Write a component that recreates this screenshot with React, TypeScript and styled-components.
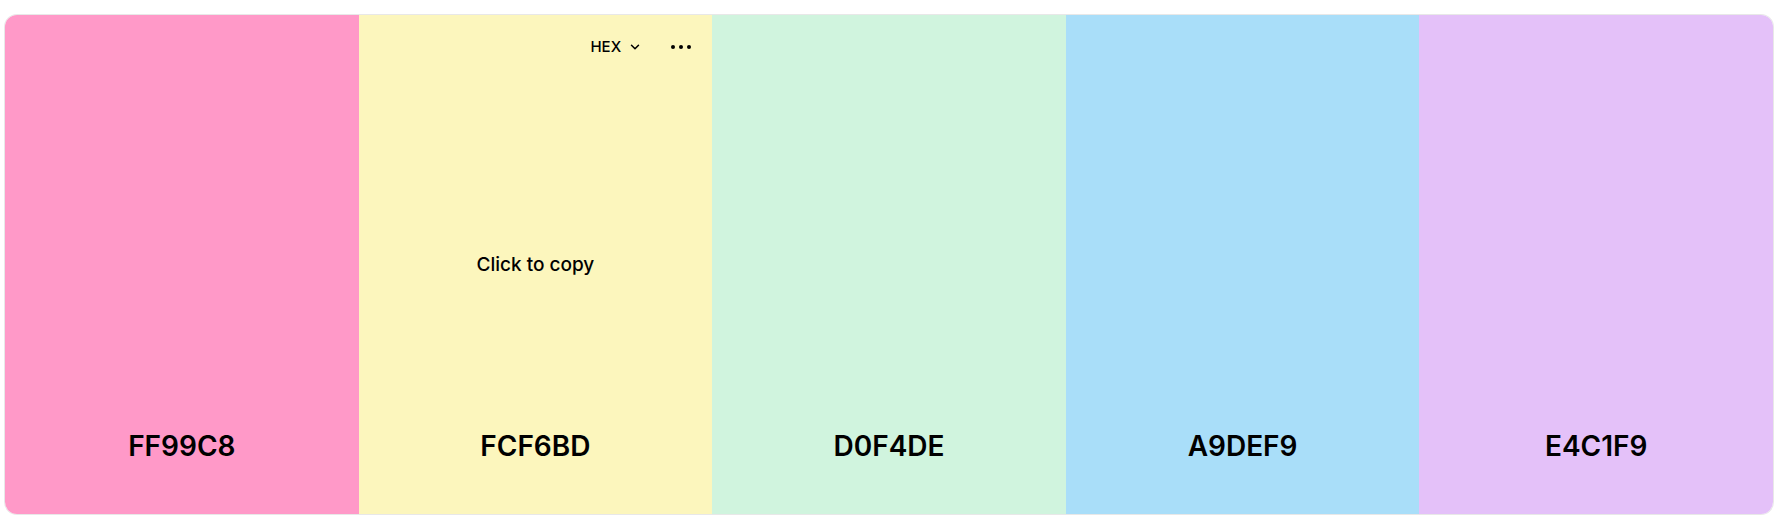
import React from "react";
import styled, { createGlobalStyle } from "styled-components";

const Global = createGlobalStyle`
  html, body { margin: 0; padding: 0; background: #ffffff; }
  body { font-family: Inter, "Noto Sans", sans-serif; color: #000; }
`;

const Page = styled.div`
  padding: 15px 16px 18px 5px;
`;

const Palette = styled.div`
  display: flex;
  height: 499px;
  border-radius: 12px;
  overflow: hidden;
  box-shadow: 0 0 0 1px rgba(0, 0, 0, 0.09);
`;

const Swatch = styled.div<{ $color: string }>`
  position: relative;
  flex: 1 1 0;
  display: flex;
  flex-direction: column;
  justify-content: flex-end;
  align-items: center;
  background: ${(p) => p.$color};
  padding-bottom: 51px;
`;

const Code = styled.div`
  font-family: Inter, "Noto Sans", sans-serif;
  font-size: 28px;
  line-height: 34px;
  font-weight: 600;
  color: #000;
  letter-spacing: 0;
`;

const Toolbar = styled.div`
  position: absolute;
  top: 23px;
  right: 21px;
  display: flex;
  align-items: center;
  height: 18px;
`;

const FormatButton = styled.div`
  display: flex;
  align-items: center;
  gap: 7px;
  font-size: 15px;
  line-height: 18px;
  font-weight: 500;
  margin-right: 29px;
`;

const CopyHint = styled.div`
  position: absolute;
  top: 50%;
  left: 0;
  right: 0;
  transform: translateY(-50%);
  margin-top: -1px;
  text-align: center;
  font-size: 19px;
  line-height: 23px;
  font-weight: 500;
`;

const Chevron = () => (
  <svg width="14" height="14" viewBox="0 0 24 24" fill="none" stroke="#000" strokeWidth="2.6" strokeLinecap="round" strokeLinejoin="round">
    <path d="m6 9 6 6 6-6" />
  </svg>
);

const Dots = () => (
  <svg width="20" height="6" viewBox="0 0 20 6" fill="#000">
    <circle cx="2" cy="3" r="2" />
    <circle cx="10" cy="3" r="2" />
    <circle cx="18" cy="3" r="2" />
  </svg>
);

const colors = ["FF99C8", "FCF6BD", "D0F4DE", "A9DEF9", "E4C1F9"];

export default function App() {
  return (
    <>
      <Global />
      <Page>
        <Palette>
          {colors.map((c, i) => (
            <Swatch key={c} $color={`#${c}`}>
              {i === 1 && (
                <>
                  <Toolbar>
                    <FormatButton>
                      HEX
                      <Chevron />
                    </FormatButton>
                    <Dots />
                  </Toolbar>
                  <CopyHint>Click to copy</CopyHint>
                </>
              )}
              <Code>{c}</Code>
            </Swatch>
          ))}
        </Palette>
      </Page>
    </>
  );
}
